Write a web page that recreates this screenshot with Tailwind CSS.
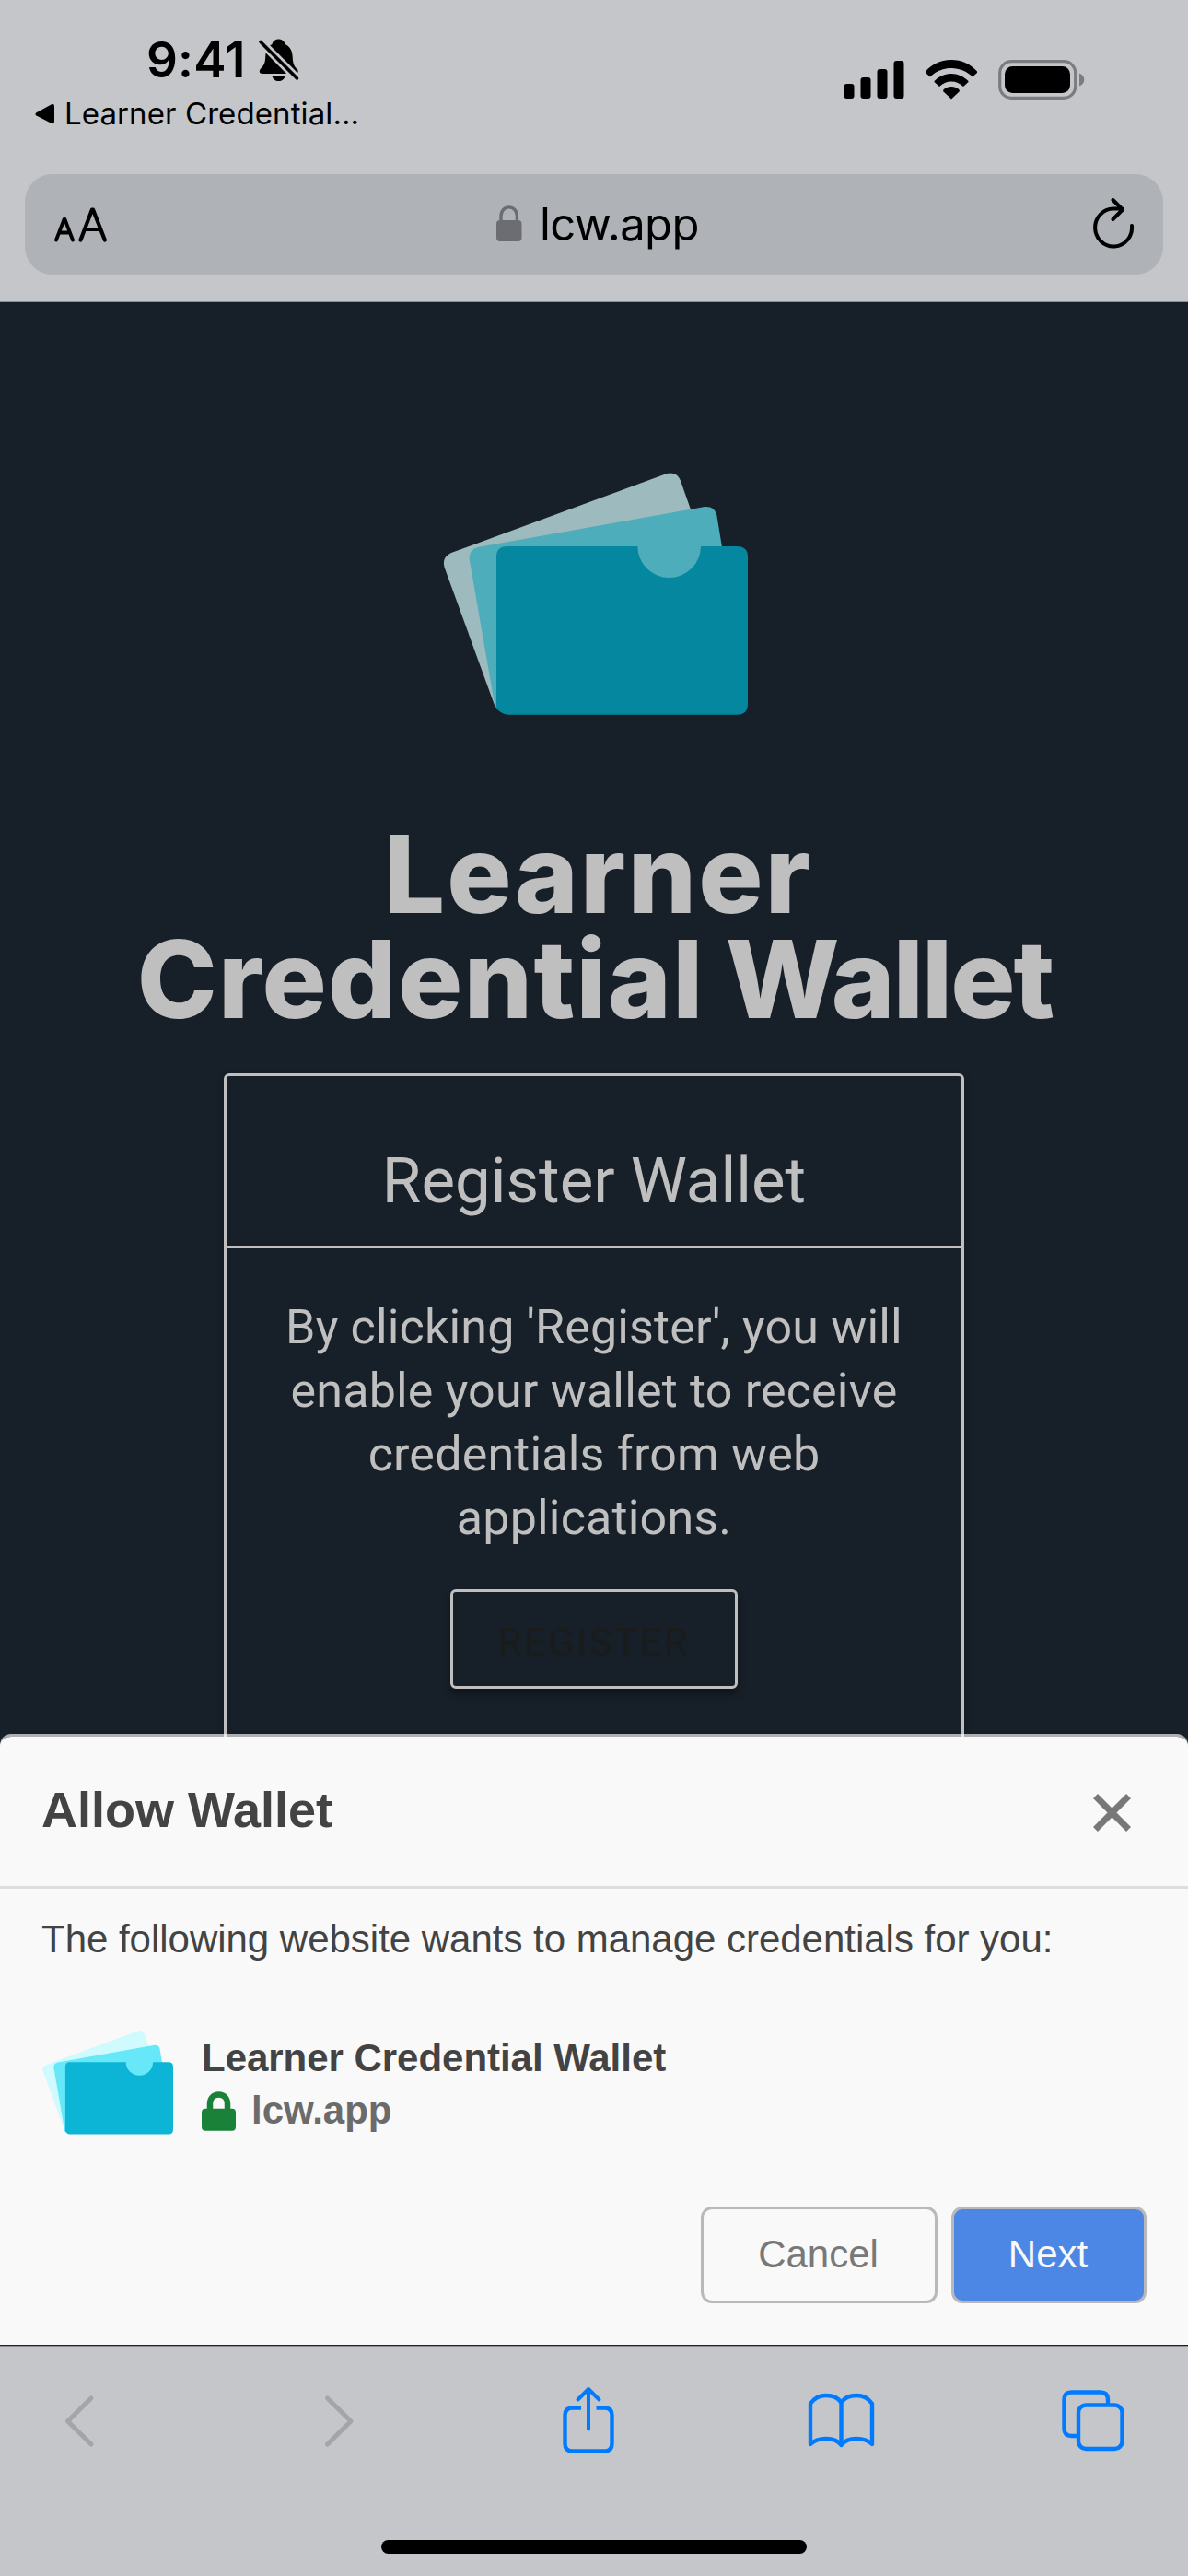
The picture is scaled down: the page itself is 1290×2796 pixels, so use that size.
<!DOCTYPE html>
<html lang="en">
<head>
<meta charset="utf-8">
<title>Learner Credential Wallet</title>
<script src="https://cdn.jsdelivr.net/npm/@tailwindcss/browser@4"></script>
</head>
<body class="w-[1290px] h-[2796px] overflow-hidden flex flex-col bg-[#c5c6ca] font-[Inter,sans-serif] text-black">

<!-- Status bar and address bar -->
<header class="h-[328px] shrink-0 flex flex-col border-b border-[#8c9295]">
  <div class="h-[189px] flex justify-between">
    <div class="flex flex-col pt-[35px]">
      <div class="flex items-start pl-[159px]">
        <span class="text-[53px] leading-[60px] font-semibold tracking-[0.2px]">9:41</span>
        <svg class="ml-[13px] mt-[6px]" width="46" height="48" viewBox="0 0 46 48">
          <path d="M22.500 1.500C26.500 1.500 29 4 29.500 7C35.500 9.500 37.500 15 37.700 21C38 28 39.500 31.500 43 34.500C44.500 36.500 43.500 39 41 39H5C1.500 39 1 36 3 33.500C7.500 29.500 8 26 8.300 20C8.600 14 10.500 9 15.500 7C16 4 18.500 1.500 22.500 1.500Z"/>
          <path d="M15.500 41.500H29.500C29 45 26 47 22.500 47S16 45 15.500 41.500Z"/>
          <path d="M3 4.500L42.500 44" stroke="#c5c6ca" stroke-width="9"/>
          <path d="M3 4.500L42.500 44" stroke="#000" stroke-width="3.600" stroke-linecap="round"/>
        </svg>
      </div>
      <div class="mt-2 flex items-start pl-[37px]">
        <svg class="mt-[9px]" width="23" height="24" viewBox="0 0 23 24"><path d="M2.500 10.200L19 1.300Q22 .3 22 3.500V20Q22 23.200 19 22L2.500 13.500Q.3 11.900 2.500 10.200Z"/></svg>
        <span class="ml-[10px] text-[33px] leading-[40px] tracking-[0.1px]">Learner Credential...</span>
      </div>
    </div>
    <div class="flex items-start pt-[65px] pr-[112px]">
      <svg width="66" height="43" viewBox="0 0 66 43">
        <rect x="0.500" y="26" width="11" height="16" rx="3"/><rect x="18.500" y="19" width="11" height="23" rx="3"/><rect x="36.500" y="10" width="11" height="32" rx="3"/><rect x="54.500" y="1" width="11" height="41" rx="3"/>
      </svg>
      <svg class="ml-[22px]" width="58" height="43" viewBox="0 0 58 43">
        <path d="M29 0C40 0 50 4.500 57 12.500L57 14L52 18.500C46 12.500 38 9 29 9S12 12.500 6 18.500L1 14L1 12.500C8 4.500 18 0 29 0Z"/>
        <path d="M29 15C36 15 42.500 18 47.500 23L47.500 24L42 29C38.500 25.500 34 23.500 29 23.500S19.500 25.500 16 29L10.500 24L10.500 23C15.500 18 22 15 29 15Z"/>
        <path d="M29 29C32.500 29 35.500 30.500 38 33L37.500 34.500L29 42.500L20.500 34.500L20 33C22.500 30.500 25.500 29 29 29Z"/>
      </svg>
      <svg class="ml-[22px]" width="94" height="43" viewBox="0 0 94 43">
        <rect x="1.700" y="1.700" width="82" height="39.600" rx="12.500" fill="none" stroke="#7b7c7f" stroke-width="3.200"/>
        <rect x="7" y="7" width="71" height="29" rx="8.500"/>
        <path d="M88 14.500C95 17 95 26 88 28.500Z" fill="#7b7c7f"/>
      </svg>
    </div>
  </div>
  <div class="mx-[27px] h-[109px] rounded-[30px] bg-[#afb2b6] flex items-start">
    <svg class="ml-[31px] mt-[35px]" width="60" height="40" viewBox="0 0 60 40" fill="none" stroke="#000" stroke-linecap="round" stroke-linejoin="round">
      <path stroke-width="3.800" d="M3 36.500L11.600 14L12.400 14L21 36.500M6 28.500H18"/>
      <path stroke-width="4.200" d="M29.500 36.500L42 3.500L43 3.500L55.800 36.500M34 25H51.500"/>
    </svg>
    <svg class="ml-[421px] mt-[34px]" width="28" height="40" viewBox="0 0 28 40">
      <rect x="0" y="16" width="27.500" height="23" rx="4" fill="#6c6d72"/>
      <path d="M5 18V11.500C5 5.500 9 1.900 13.700 1.900S22.400 5.500 22.400 11.500V18" fill="none" stroke="#6c6d72" stroke-width="3.400"/>
    </svg>
    <span class="ml-[19px] mt-[21px] text-[49px] leading-[68px] tracking-[-0.6px]">lcw.app</span>
    <svg class="ml-auto mr-[28px] mt-[23px]" width="50" height="58" viewBox="0 0 50 58" fill="none" stroke="#000" stroke-width="4" stroke-linecap="round" stroke-linejoin="round">
      <path d="M44 33A20 20.500 0 1 1 24 14.500L33.500 14.500M23.500 5L34 15.500L23.500 26"/>
    </svg>
  </div>
</header>

<!-- Web page, dimmed below the dialog -->
<main class="relative h-[2217px] shrink-0 overflow-hidden bg-[#171f28] text-[#bfbfbf] flex flex-col">
  <svg class="shrink-0 mt-[162px] ml-[460px]" width="380" height="310" viewBox="0 0 1140 930">
    <path fill="#9dbbbf" d="M90 330L792 72Q825 65 837 95L872 195L500 840H240L231 826L68 378Q58 345 90 330Z"/>
    <path fill="#4eadbb" d="M180 311L915 180Q948 177 955 208L975 330L960 420L500 840H240L232 828L149 350Q147 318 180 311Z"/>
    <path fill="#04879f" d="M272 309H697A103 102 0 0 0 903 309H1021Q1056 309 1056 344V822Q1056 857 1021 857H272Q250 855 234 832L237 828V344Q237 309 272 309Z"/>
  </svg>
  <h1 class="mt-[92px] text-center text-[117px] leading-[114px] font-extrabold"><span class="ml-[9px] tracking-[2.2px]">Learner</span><br><span class="ml-[2px] tracking-[1.4px]">Credential</span><span class="ml-[23px] tracking-[-1.9px]">Wallet</span></h1>
  <section class="mt-[45px] mx-auto w-[804px] h-[800px] shrink-0 rounded-[6px] border-[3px] border-[#bfbfbf] font-[Roboto,sans-serif] text-center shadow-[0_3px_9px_rgba(0,0,0,0.2)]">
    <h2 class="h-[187px] border-b-[3px] border-[#bfbfbf] pt-[74px] text-[69px] leading-[80px]">Register Wallet</h2>
    <p class="pt-[51px] px-12 text-[52px] leading-[69px] tracking-[0.18px]">By clicking 'Register', you will<br>enable your wallet to receive<br>credentials from web<br>applications.</p>
    <button class="mt-[43px] w-[312px] h-[108px] rounded-[6px] border-[3px] border-[#bfbfbf] bg-[#171f28] pt-[8px] text-[42px] leading-[60px] tracking-[2.4px] text-[#1a1c1c] shadow-[0_6px_8px_rgba(0,0,0,0.35)]">REGISTER</button>
  </section>

  <!-- Permission dialog -->
  <div class="absolute left-0 top-[1554px] w-full h-[663px] rounded-t-[12px] border-t-[3px] border-white/65 bg-[#f9f9f9] bg-clip-padding font-['Liberation_Sans',Arial,sans-serif] text-[#434343] flex flex-col">
    <div class="h-[165px] shrink-0 border-b-[3px] border-[#dedede] flex items-center justify-between pl-[45px] pr-[61px]">
      <span class="text-[54px] font-bold pb-[3px]">Allow Wallet</span>
      <svg class="mt-[3px]" width="43" height="43" viewBox="0 0 43 43" stroke="#787878" stroke-width="7"><path d="M3.500 3.500L39.500 39.500M39.500 3.500L3.500 39.500"/></svg>
    </div>
    <p class="pt-[31px] pl-[45px] text-[42px] leading-[48px] tracking-[-0.02px]">The following website wants to manage credentials for you:</p>
    <div class="mt-[65px] flex items-start h-[133px]">
      <svg class="ml-[37px]" width="163" height="133" viewBox="0 0 1140 930">
        <path fill="#cffafe" d="M90 330L792 72Q825 65 837 95L872 195L500 840H240L231 826L68 378Q58 345 90 330Z"/>
        <path fill="#67e8f9" d="M180 311L915 180Q948 177 955 208L975 330L960 420L500 840H240L232 828L149 350Q147 318 180 311Z"/>
        <path fill="#0cb5d6" d="M272 309H697A103 102 0 0 0 903 309H1021Q1056 309 1056 344V822Q1056 857 1021 857H272Q250 855 234 832L237 828V344Q237 309 272 309Z"/>
      </svg>
      <div class="ml-[19px] mt-[11px] text-[42px] leading-[57px] font-bold">
        <div class="tracking-[-0.03px]">Learner Credential Wallet</div>
        <div class="flex items-start text-[#6b6b6b]">
          <svg class="mt-[8px]" width="37" height="43" viewBox="0 0 37 43">
            <rect x="0" y="18.700" width="37" height="24" rx="4" fill="#1a8238"/>
            <path d="M9 21V13.500C9 7.500 13 3.500 18.500 3.500S28 7.500 28 13.500V21" fill="none" stroke="#1a8238" stroke-width="6.500"/>
          </svg>
          <span class="ml-[17px]">lcw.app</span>
        </div>
      </div>
    </div>
    <div class="mt-[68px] mr-[45px] flex justify-end gap-[15px] text-[42px]">
      <button class="w-[257px] h-[105px] rounded-[12px] border-[3px] border-[#b9b9b9] text-[#787878] pb-[3px] pr-[2px]">Cancel</button>
      <button class="w-[212px] h-[105px] rounded-[12px] border-[3px] border-[#b9b9b9] bg-[#4d87e5] text-[#f9f9f9] pb-[3px] pr-[2px]">Next</button>
    </div>
  </div>
</main>

<!-- Browser toolbar -->
<footer class="flex-1 flex flex-col items-center border-t border-[#1f1f24]">
  <div class="w-full h-[211px] border-t border-[#8e9096] pt-[41px] flex items-start fill-none">
    <svg class="ml-[69px] mt-[11px]" width="34" height="58" viewBox="0 0 34 58" stroke="#a5a5a7" stroke-width="5" stroke-linecap="round" stroke-linejoin="round"><path d="M30 4L4.500 29L30 54"/></svg>
    <svg class="ml-[248px] mt-[11px]" width="34" height="58" viewBox="0 0 34 58" stroke="#a5a5a7" stroke-width="5" stroke-linecap="round" stroke-linejoin="round"><path d="M4.500 4L30 29L4.500 54"/></svg>
    <svg class="ml-[225px] mt-[1px]" width="60" height="78" viewBox="0 0 60 78" stroke="#007aff" stroke-width="4.400"><path d="M21 24.500H11.500Q3.500 24.500 3.500 32.500V63.500Q3.500 71.500 11.500 71.500H46.500Q54.500 71.500 54.500 63.500V32.500Q54.500 24.500 46.500 24.500H37.500"/><path stroke-width="4" stroke-linecap="round" stroke-linejoin="round" d="M17.500 15.500L29 4L40.500 15.500M29 4V47.500"/></svg>
    <svg class="ml-[206px] mt-[8px]" width="75" height="64" viewBox="0 0 75 64" stroke="#007aff" stroke-width="4.400" stroke-linejoin="round" stroke-linecap="round"><path d="M37.500 12C34 6 28 4 21 4S8 7 4 13V57C8 53 14 51 21 51S34 53 37.500 58C41 53 47 51 54 51S67 53 71 57V13C67 7 61 4 54 4S41 6 37.500 12V58"/></svg>
    <svg class="ml-[200px] mt-[5px]" width="72" height="70" viewBox="0 0 72 70" stroke="#007aff" stroke-width="4.400"><path d="M52 16V11.500Q52 3.500 44 3.500H12.500Q4.500 3.500 4.500 11.500V43Q4.500 51 12.500 51H19"/><rect x="20" y="17.500" width="47.500" height="47.500" rx="8"/></svg>
  </div>
  <div class="w-[462px] h-[15px] rounded-full bg-black"></div>
</footer>
</body>
</html>
